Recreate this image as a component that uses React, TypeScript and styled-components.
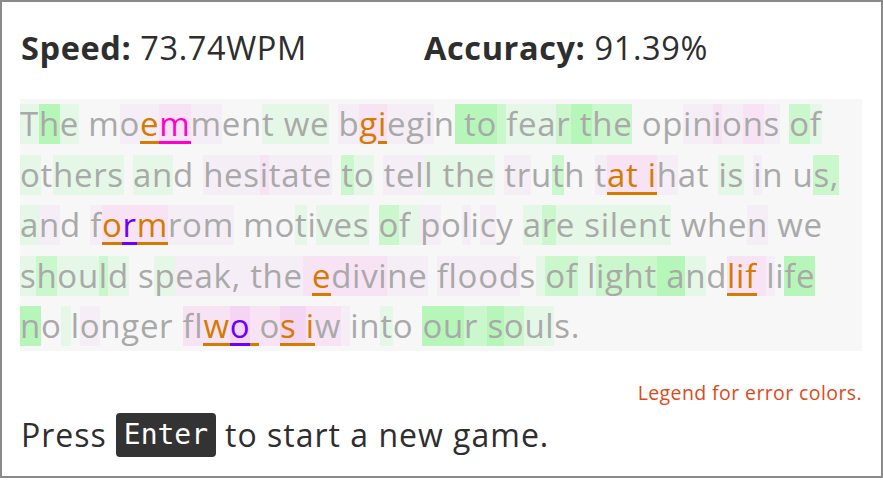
import styled, { createGlobalStyle } from 'styled-components';

const GlobalStyle = createGlobalStyle`
  body {
    margin: 0;
    background: #fff;
    font-family: 'Open Sans', 'Noto Sans', sans-serif;
    color: #2e2e2e;
  }
`;

type Level = '.' | 'g' | 'G' | 'H' | 'p' | 'P' | 'Q';
type Mark = '.' | 'o' | 'O' | 'm' | 'v';

const levelColors: Record<Level, string> = {
  '.': 'transparent',
  g: '#e5f7e6',
  G: '#cbf7cd',
  H: '#b6f7b9',
  p: '#f6eef6',
  P: '#f8e3f5',
  Q: '#f5d6f2',
};

const markColors: Record<Mark, string> = {
  '.': '#a9a9a9',
  o: '#d47b00',
  O: '#d47b00',
  m: '#ff00cc',
  v: '#6a00ff',
};

// text, speed shading per char, error marks per index
const lines: { text: string; bg: string; errors: Record<number, Mark> }[] = [
  {
    text: 'The moemment we bgiegin to fear the opinions of',
    bg: 'gHg..' + 'ppPp..' + 'gggg.' + 'pPPppp.' + 'HHHGgggGHHGG' + '...ppPpPp.' + 'Gg',
    errors: { 6: 'o', 7: 'm', 17: 'O', 18: 'o' },
  },
  {
    text: 'others and hesitate to tell the truth tat ihat is in us,',
    bg:
      'g.gggg' + '.' + 'gg.' + '.' + 'pppPpppp' + '.' + 'Gg' + '.' + 'pppg' + 'g' + 'ggg' + '.' +
      'pp.G.' + '.' + 'pPP' + 'P' + 'Pp..' + '.' + 'gg' + '.' + 'p.' + '.' + '.GG',
    errors: { 39: 'o', 40: 'o', 41: 'o', 42: 'o' },
  },
  {
    text: 'and formrom motives of policy are silent when we',
    bg:
      'gp.' + '.' + 'pPPPppp' + '.' + '..g.ggg' + '.' + 'Gg' + 'g' + 'p.p.p.' + '.' + 'gGg' + 'g' +
      'gggggg' + '.' + '...p' + '.' + '..',
    errors: { 5: 'o', 6: 'v', 7: 'o' },
  },
  {
    text: 'should speak, the edivine floods of light andlif life',
    bg:
      'gGggGg' + '.' + '.gpppp' + 'p' + 'ppp' + 'P' + 'PPPPPpp' + '.' + 'ppppp.' + 'g' + 'GG' + 'g' +
      'gGGGG' + 'H' + 'Hg.PPP' + 'P' + 'p.HH',
    errors: { 18: 'o', 45: 'o', 46: 'o', 47: 'o' },
  },
  {
    text: 'no longer flwo os iw into our souls.',
    bg: 'H.' + 'g' + '.p....' + '.' + 'PPPQ' + 'P' + 'PQ' + 'Q' + 'PP' + 'p' + '..g.' + '.' + 'HHG' + 'G' + 'HGgg..',
    errors: { 12: 'o', 13: 'v', 14: 'o', 16: 'o', 17: 'o', 18: 'o' },
  },
];

const Frame = styled.div`
  box-sizing: border-box;
  width: 883px;
  height: 478px;
  border: 2px solid #8a8a8a;
  padding: 0 19px 0 18px;
`;

const Stats = styled.div`
  display: flex;
  padding-top: 27px;
  height: 38px;
  margin-bottom: 32px;
  font-size: 32.5px;
  letter-spacing: 0.6px;
  line-height: 38px;
`;

const Stat = styled.div`
  width: 402px;
  padding-left: 1px;

  & > b {
    font-weight: 700;
  }
`;

const Passage = styled.div`
  background: #f7f7f7;
  padding: 5px 0;
  display: flex;
  flex-direction: column;
  row-gap: 10.5px;
  font-size: 33px;
`;

const Row = styled.div`
  display: flex;
  height: 40px;
`;

const Char = styled.span<{ $bg: string; $color: string; $under: boolean }>`
  display: inline-block;
  height: 40px;
  line-height: 40px;
  white-space: pre;
  padding-right: 0.7px;
  background: ${(p) => p.$bg};
  color: ${(p) => p.$color};
  box-shadow: ${(p) => (p.$under ? `inset 0 -3px 0 ${p.$color}` : 'none')};
`;

const Legend = styled.div`
  text-align: right;
  margin-top: 31px;
  font-size: 19.5px;
  letter-spacing: 0.4px;
  line-height: 22px;
  color: #dd4a1a;
`;

const Prompt = styled.div`
  display: flex;
  align-items: center;
  gap: 9px;
  margin-top: 9px;
  font-size: 32px;
  letter-spacing: 1px;
  line-height: 44px;
  padding-left: 1px;
`;

const Kbd = styled.kbd`
  display: inline-block;
  height: 44px;
  padding: 0 8px;
  border-radius: 4px;
  background: #333;
  color: #fff;
  font-family: 'DejaVu Sans Mono', monospace;
  font-size: 28px;
  letter-spacing: 0;
  line-height: 44px;
`;

export default function App() {
  return (
    <>
      <GlobalStyle />
      <Frame>
        <Stats>
          <Stat>
            <b>Speed:</b> 73.74WPM
          </Stat>
          <Stat>
            <b>Accuracy:</b> 91.39%
          </Stat>
        </Stats>
        <Passage>
          {lines.map((line, li) => (
            <Row key={li}>
              {line.text.split('').map((ch, i) => {
                const mark = line.errors[i] ?? '.';
                return (
                  <Char
                    key={i}
                    $bg={levelColors[(line.bg[i] as Level) ?? '.']}
                    $color={markColors[mark]}
                    $under={mark !== '.' && mark !== 'O'}
                  >
                    {ch}
                  </Char>
                );
              })}
            </Row>
          ))}
        </Passage>
        <Legend>Legend for error colors.</Legend>
        <Prompt>
          <span>Press</span>
          <Kbd>Enter</Kbd>
          <span>to start a new game.</span>
        </Prompt>
      </Frame>
    </>
  );
}
